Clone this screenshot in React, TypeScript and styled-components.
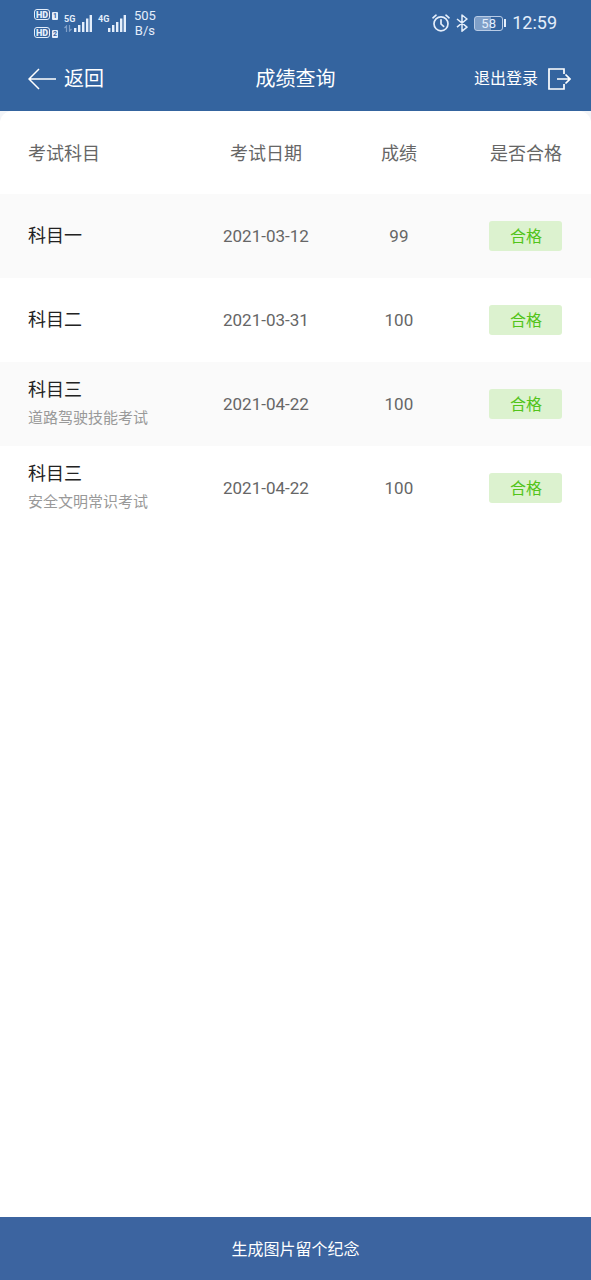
import React from "react";
import styled, { createGlobalStyle } from "styled-components";

const GlobalStyle = createGlobalStyle`
  *, *::before, *::after { box-sizing: border-box; }
  body {
    margin: 0;
    background: #f3f5f8;
    color: #333;
    font-family: Roboto, "Noto Sans CJK SC", sans-serif;
  }
  button { font: inherit; border: 0; cursor: pointer; }
`;

const Page = styled.div`
  min-height: 100vh;
  display: flex;
  flex-direction: column;
`;

const TopArea = styled.header`
  background: #34649f;
  color: #fff;
`;

const StatusBar = styled.div`
  height: 46px;
  padding: 0 34px;
  display: flex;
  align-items: center;
  justify-content: space-between;
  color: #e4eefb;
`;

const StatusGroup = styled.div`
  display: flex;
  align-items: center;
  gap: 6px;
`;

const HdStack = styled.div`
  display: grid;
  gap: 7px;
`;

const HdLine = styled.div`
  display: flex;
  align-items: flex-end;
  gap: 2px;
`;

const HdTag = styled.span`
  width: 16px;
  height: 11px;
  border: 1px solid #e4eefb;
  border-radius: 3px;
  font-size: 9px;
  line-height: 10px;
  font-weight: 900;
  display: flex;
  justify-content: center;
`;

const SimTag = styled.span`
  width: 6px;
  height: 8px;
  border-radius: 1px;
  background: #e4eefb;
  color: #34649f;
  font-size: 7px;
  line-height: 8px;
  font-weight: 700;
  text-align: center;
`;

const Signal = styled.div`
  display: grid;
  grid-template-columns: 10px 18px;
`;

const Network = styled.span`
  font-size: 9px;
  line-height: 10px;
  font-weight: 700;
`;

const NetworkColumn = styled.div`
  display: flex;
  flex-direction: column;
  gap: 1px;
`;

const Speed = styled.div`
  padding-left: 2px;
  font-size: 13px;
  line-height: 15px;
  text-align: center;
`;

const Battery = styled.div`
  display: flex;
  align-items: center;
  gap: 1px;
`;

const BatteryBody = styled.span`
  width: 29px;
  height: 15px;
  border: 1px solid #b9cce6;
  border-radius: 3px;
  background: linear-gradient(90deg, #7f9fc8 58%, transparent 58%);
  font-size: 13px;
  line-height: 14px;
  text-align: center;
`;

const BatteryCap = styled.span`
  width: 2px;
  height: 8px;
  background: #e4eefb;
`;

const Clock = styled.time`
  font-size: 18px;
  line-height: 24px;
`;

const NavBar = styled.nav`
  height: 65px;
  padding: 0 20px;
  display: grid;
  grid-template-columns: 1fr auto 1fr;
  align-items: center;
`;

const BackButton = styled.button`
  justify-self: start;
  display: flex;
  align-items: center;
  gap: 8px;
  padding: 0 0 0 8px;
  background: none;
  color: #fff;
  font-size: 20px;
  line-height: 30px;
`;

const LogoutButton = styled(BackButton)`
  justify-self: end;
  gap: 10px;
  padding: 0;
  font-size: 16px;
`;

const Title = styled.h1`
  margin: 0;
  font-size: 20px;
  line-height: 30px;
  font-weight: 400;
`;

const Card = styled.main`
  flex: 1;
  background: #fff;
  border-radius: 12px 12px 0 0;
`;

const ScoreTable = styled.table`
  width: 100%;
  table-layout: fixed;
  border-collapse: collapse;
`;

const HeadCell = styled.th<{ $width: number; $first?: boolean }>`
  width: ${(p) => p.$width}%;
  height: 83px;
  padding: ${(p) => (p.$first ? "3px 0 0 28px" : "3px 0 0")};
  text-align: ${(p) => (p.$first ? "left" : "center")};
  color: #666;
  font-size: 18px;
  line-height: 26px;
  font-weight: 400;
`;

const Row = styled.tr`
  height: 84px;
  &:nth-child(odd) { background: #fafafa; }
`;

const SubjectCell = styled.th`
  padding: 0 0 0 28px;
  text-align: left;
  font-weight: 400;
`;

const Subject = styled.div`
  color: #222;
  font-size: 18px;
  line-height: 28px;
`;

const Detail = styled.div`
  color: #999;
  font-size: 15px;
  line-height: 28px;
`;

const Cell = styled.td`
  padding: 0;
  text-align: center;
  color: #666;
  font-size: 17px;
  line-height: 24px;
`;

const Badge = styled.span`
  display: inline-block;
  width: 73px;
  padding-top: 2px;
  border-radius: 3px;
  background: #dcf2cf;
  color: #52c41a;
  font-size: 16px;
  line-height: 28px;
  vertical-align: middle;
`;

const SaveButton = styled.button`
  height: 63px;
  padding: 0 0 2px;
  background: #3c64a0;
  color: #fff;
  font-size: 16px;
`;

const Bars = () => (
  <svg width="18" height="18" viewBox="0 0 18 18" fill="#e4eefb" aria-hidden="true">
    <rect x="0" y="14" width="2.4" height="4" />
    <rect x="4" y="11" width="2.4" height="7" />
    <rect x="8" y="8" width="2.4" height="10" />
    <rect x="12" y="4.5" width="2.4" height="13.5" />
    <rect x="15.6" y="1" width="2.4" height="17" />
  </svg>
);

const DataArrows = () => (
  <svg width="8" height="7" viewBox="0 0 8 7" fill="none" stroke="#7f9fc8" strokeWidth="1.2" aria-hidden="true">
    <path d="M2.500 7V1L.5 3M5.500 0v6l2-2" />
  </svg>
);

const AlarmIcon = () => (
  <svg width="18" height="18" viewBox="0 0 18 18" fill="none" stroke="#e4eefb" strokeWidth="1.700" strokeLinecap="round" aria-hidden="true">
    <circle cx="9" cy="9.800" r="7" />
    <path d="M9 5.800V10l2.600 2.400M1 3.800 4 1.200M17 3.800 14 1.200" />
  </svg>
);

const BluetoothIcon = () => (
  <svg width="12" height="18" viewBox="0 0 12 18" fill="none" stroke="#e4eefb" strokeWidth="1.500" strokeLinejoin="round" aria-hidden="true">
    <path d="M1 5l10 8.200-5 4V1l5 4L1 13.200" />
  </svg>
);

const BackIcon = () => (
  <svg width="28" height="22" viewBox="0 0 28 22" fill="none" stroke="currentColor" strokeWidth="1.500" aria-hidden="true">
    <path d="M28 11H1M11 1 1 11l10 10" />
  </svg>
);

const LogoutIcon = () => (
  <svg width="23" height="22" viewBox="0 0 23 22" fill="none" stroke="currentColor" strokeWidth="1.700" aria-hidden="true">
    <path d="M16 6V1H1v20h15v-5M9 11h13M17.500 6.500 22 11l-4.500 4.500" />
  </svg>
);

const results = [
  { subject: "科目一", date: "2021-03-12", score: 99 },
  { subject: "科目二", date: "2021-03-31", score: 100 },
  { subject: "科目三", detail: "道路驾驶技能考试", date: "2021-04-22", score: 100 },
  { subject: "科目三", detail: "安全文明常识考试", date: "2021-04-22", score: 100 },
];

export default function App() {
  return (
    <Page>
      <GlobalStyle />
      <TopArea>
        <StatusBar>
          <StatusGroup>
            <HdStack>
              <HdLine><HdTag>HD</HdTag><SimTag>1</SimTag></HdLine>
              <HdLine><HdTag>HD</HdTag><SimTag>2</SimTag></HdLine>
            </HdStack>
            <Signal>
              <NetworkColumn><Network>5G</Network><DataArrows /></NetworkColumn>
              <Bars />
            </Signal>
            <Signal>
              <NetworkColumn><Network>4G</Network></NetworkColumn>
              <Bars />
            </Signal>
            <Speed>505<br />B/s</Speed>
          </StatusGroup>
          <StatusGroup>
            <AlarmIcon />
            <BluetoothIcon />
            <Battery><BatteryBody>58</BatteryBody><BatteryCap /></Battery>
            <Clock>12:59</Clock>
          </StatusGroup>
        </StatusBar>
        <NavBar>
          <BackButton type="button"><BackIcon />返回</BackButton>
          <Title>成绩查询</Title>
          <LogoutButton type="button">退出登录<LogoutIcon /></LogoutButton>
        </NavBar>
      </TopArea>
      <Card>
        <ScoreTable>
          <thead>
            <tr>
              <HeadCell scope="col" $width={33} $first>考试科目</HeadCell>
              <HeadCell scope="col" $width={24}>考试日期</HeadCell>
              <HeadCell scope="col" $width={21}>成绩</HeadCell>
              <HeadCell scope="col" $width={22}>是否合格</HeadCell>
            </tr>
          </thead>
          <tbody>
            {results.map((r, i) => (
              <Row key={i}>
                <SubjectCell scope="row">
                  <Subject>{r.subject}</Subject>
                  {r.detail && <Detail>{r.detail}</Detail>}
                </SubjectCell>
                <Cell>{r.date}</Cell>
                <Cell>{r.score}</Cell>
                <Cell><Badge>合格</Badge></Cell>
              </Row>
            ))}
          </tbody>
        </ScoreTable>
      </Card>
      <SaveButton type="button">生成图片留个纪念</SaveButton>
    </Page>
  );
}
